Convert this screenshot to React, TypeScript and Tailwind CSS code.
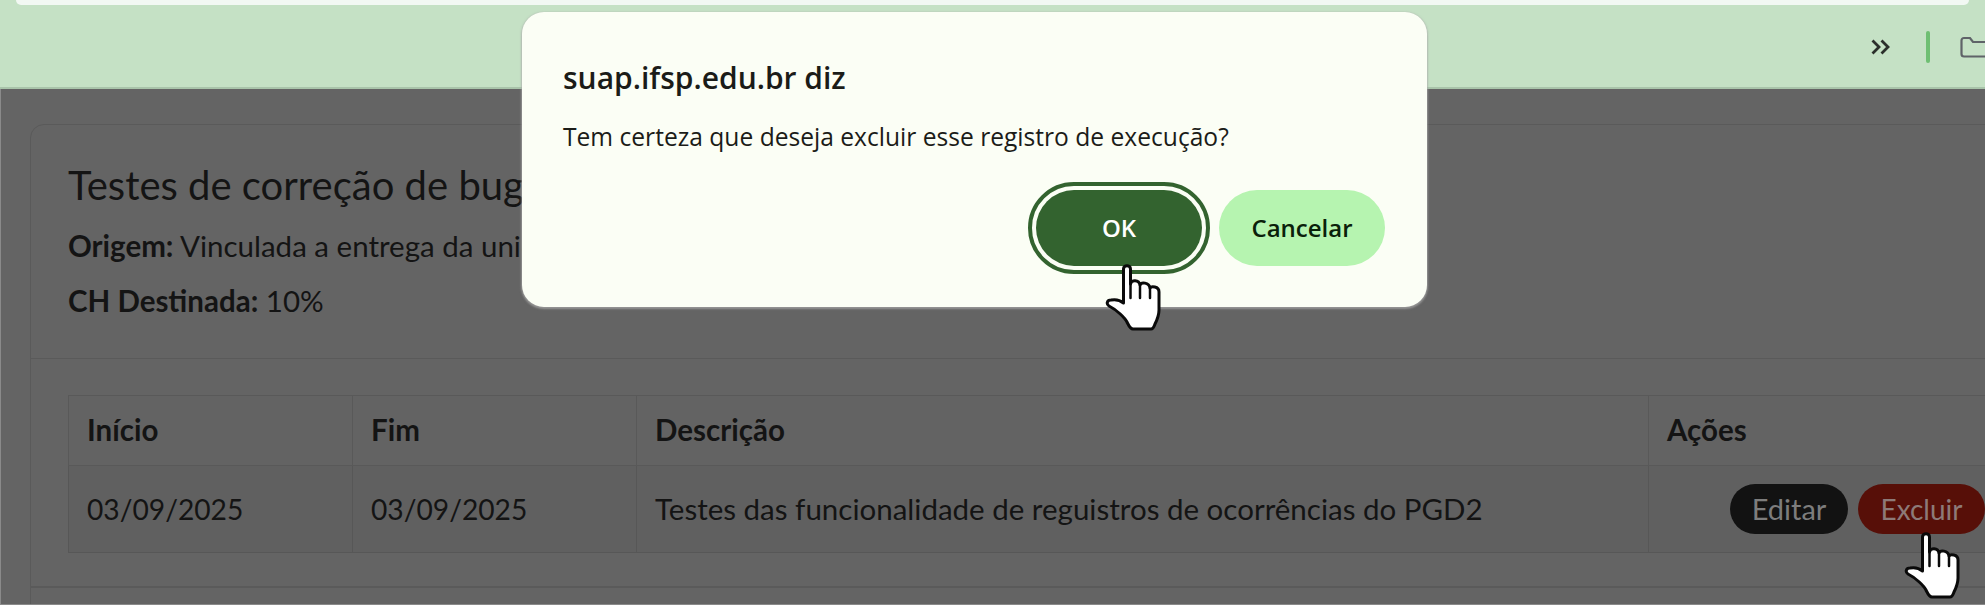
const Hand = ({ className }: { className: string }) => (
  <svg className={className} width="57" height="67" viewBox="0 0 57 67" fill="none">
    <path
      d="M18.5 39 L18.5 5 C18.5 0.5 25.5 0.5 25.5 5 L25.5 20 C26 15.5 34 15.5 35 21 C36 18 44 18 45 24 C46 22 54 22 54 28 L54 46 C54 52 52 56 50 60 C49 63 48 65 46 65 L28 65 C25 65 24 62 22 58 C20 54 12 46 4 42 C1 40 2 36 6 36 C11 35 15 36 18.5 39 Z"
      fill="#ffffff"
      stroke="#0a0a0a"
      strokeWidth="3"
      strokeLinejoin="round"
    />
    <path d="M25.5 20 L25.5 34 M35 21 L35 34 M45 24 L45 34" stroke="#0a0a0a" strokeWidth="2.5" strokeLinecap="round" />
  </svg>
);

const lato = "font-['Lato','Liberation_Sans',sans-serif]";
const dialogFont = "font-['Open_Sans','Noto_Sans',sans-serif]";

export default function App() {
  return (
    <div className={`relative flex h-[605px] w-[1985px] flex-col overflow-hidden bg-[#646464] ${lato}`}>
      <div className="h-[6px] shrink-0 bg-[#c5e1c5] px-[16px]">
        <div className="h-[5px] rounded-b-[14px] bg-[#f2f8f3]" />
      </div>
      <div className="flex h-[83px] shrink-0 items-center justify-end border-b-[2px] border-[#a9c4aa] bg-[#c5e1c5]">
        <svg width="20" height="16" viewBox="0 0 20 16" fill="none" className="mr-[35px]">
          <path d="M1.5 1.5 L8 8 L1.5 14.5 M10.5 1.5 L17 8 L10.5 14.5" stroke="#2b2f2b" strokeWidth="2.8" />
        </svg>
        <div className="mr-[30px] h-[32px] w-[4px] rounded-full bg-[#6fbf73]" />
        <svg width="25" height="24" viewBox="0 0 25 24" fill="none">
          <path d="M25 7 H13 L10 3 H4 C2.5 3 1.5 4 1.5 5.5 V19 C1.5 20.5 2.5 21.5 4 21.5 H25" stroke="#5f6368" strokeWidth="2.2" />
        </svg>
      </div>
      <div className="flex-1 border-l border-[#8a8a8a] pl-[29px] pt-[35px]">
        <div className="h-[520px] w-[2000px] rounded-tl-[14px] border border-[#5a5a5a] bg-[#646464]">
          <div className="h-[234px] border-b border-[#5a5a5a] pl-[37px] pt-[34px] text-[#141414]">
            <h1 className="h-[52px] text-[40px] leading-[52px] font-normal">Testes de correção de bugs</h1>
            <p className="mt-[17px] h-[36px] text-[29.5px] leading-[36px]"><b>Origem:</b> Vinculada a entrega da unidade</p>
            <p className="mt-[19px] h-[36px] text-[29.5px] leading-[36px]"><b>CH Destinada:</b> 10%</p>
          </div>
          <div className="h-[229px] border-b-[2px] border-[#5a5a5a] pl-[37px] pt-[36px]">
            <table className="w-[1930px] table-fixed border-collapse border border-[#565656] text-[29.5px] text-[#141414]">
              <colgroup>
                <col className="w-[284px]" />
                <col className="w-[284px]" />
                <col className="w-[1012px]" />
                <col />
              </colgroup>
              <thead>
                <tr className="h-[70px] bg-[#636363]">
                  {["Início", "Fim", "Descrição", "Ações"].map((t) => (
                    <th key={t} className="border border-[#595959] pl-[18px] text-left font-bold">{t}</th>
                  ))}
                </tr>
              </thead>
              <tbody>
                <tr className="h-[87px] bg-[#606060]">
                  <td className="border border-[#575757] pl-[18px] text-[28.2px]">03/09/2025</td>
                  <td className="border border-[#575757] pl-[18px] text-[28.2px]">03/09/2025</td>
                  <td className="border border-[#575757] pl-[18px]">Testes das funcionalidade de reguistros de ocorrências do PGD2</td>
                  <td className="border border-[#575757] pl-[81px]">
                    <div className="flex gap-[10px]">
                      <span className="flex h-[50px] w-[118px] items-center justify-center rounded-full bg-[#121212] text-[29px] text-[#7d7d7d]">Editar</span>
                      <span className="flex h-[50px] w-[127px] items-center justify-center rounded-full bg-[#570f08] text-[28px] text-[#8d7a78]">Excluir</span>
                    </div>
                  </td>
                </tr>
              </tbody>
            </table>
          </div>
        </div>
      </div>
      <div className="absolute bottom-0 left-0 h-px w-full bg-[#8a8a8a]" />

      <div className={`absolute left-[522px] top-[12px] flex h-[295px] w-[905px] flex-col rounded-[22px] bg-[#fbfef5] pl-[41px] pr-[42px] shadow-[0_1px_2px_1px_rgba(170,170,170,0.7)] ${dialogFont}`}>
        <h2 className="mt-[47px] h-[38px] text-[30px] leading-[38px] font-semibold text-[#1b1c18]">suap.ifsp.edu.br diz</h2>
        <p className="mt-[23px] h-[34px] text-[24.6px] leading-[34px] text-[#1b1c18]">Tem certeza que deseja excluir esse registro de execução?</p>
        <div className="mt-[36px] flex justify-end gap-[17px]">
          <button className="flex h-[76px] w-[166px] items-center justify-center rounded-full bg-[#33632f] text-[24px] font-semibold text-white outline-[4px] outline-offset-[4px] outline-[#33632f]">OK</button>
          <button className="flex h-[76px] w-[166px] items-center justify-center rounded-full bg-[#b6f4b0] text-[24px] font-semibold text-[#0a200a]">Cancelar</button>
        </div>
      </div>

      <Hand className="absolute left-[1105px] top-[264px]" />
      <Hand className="absolute left-[1904px] top-[532px]" />
    </div>
  );
}
